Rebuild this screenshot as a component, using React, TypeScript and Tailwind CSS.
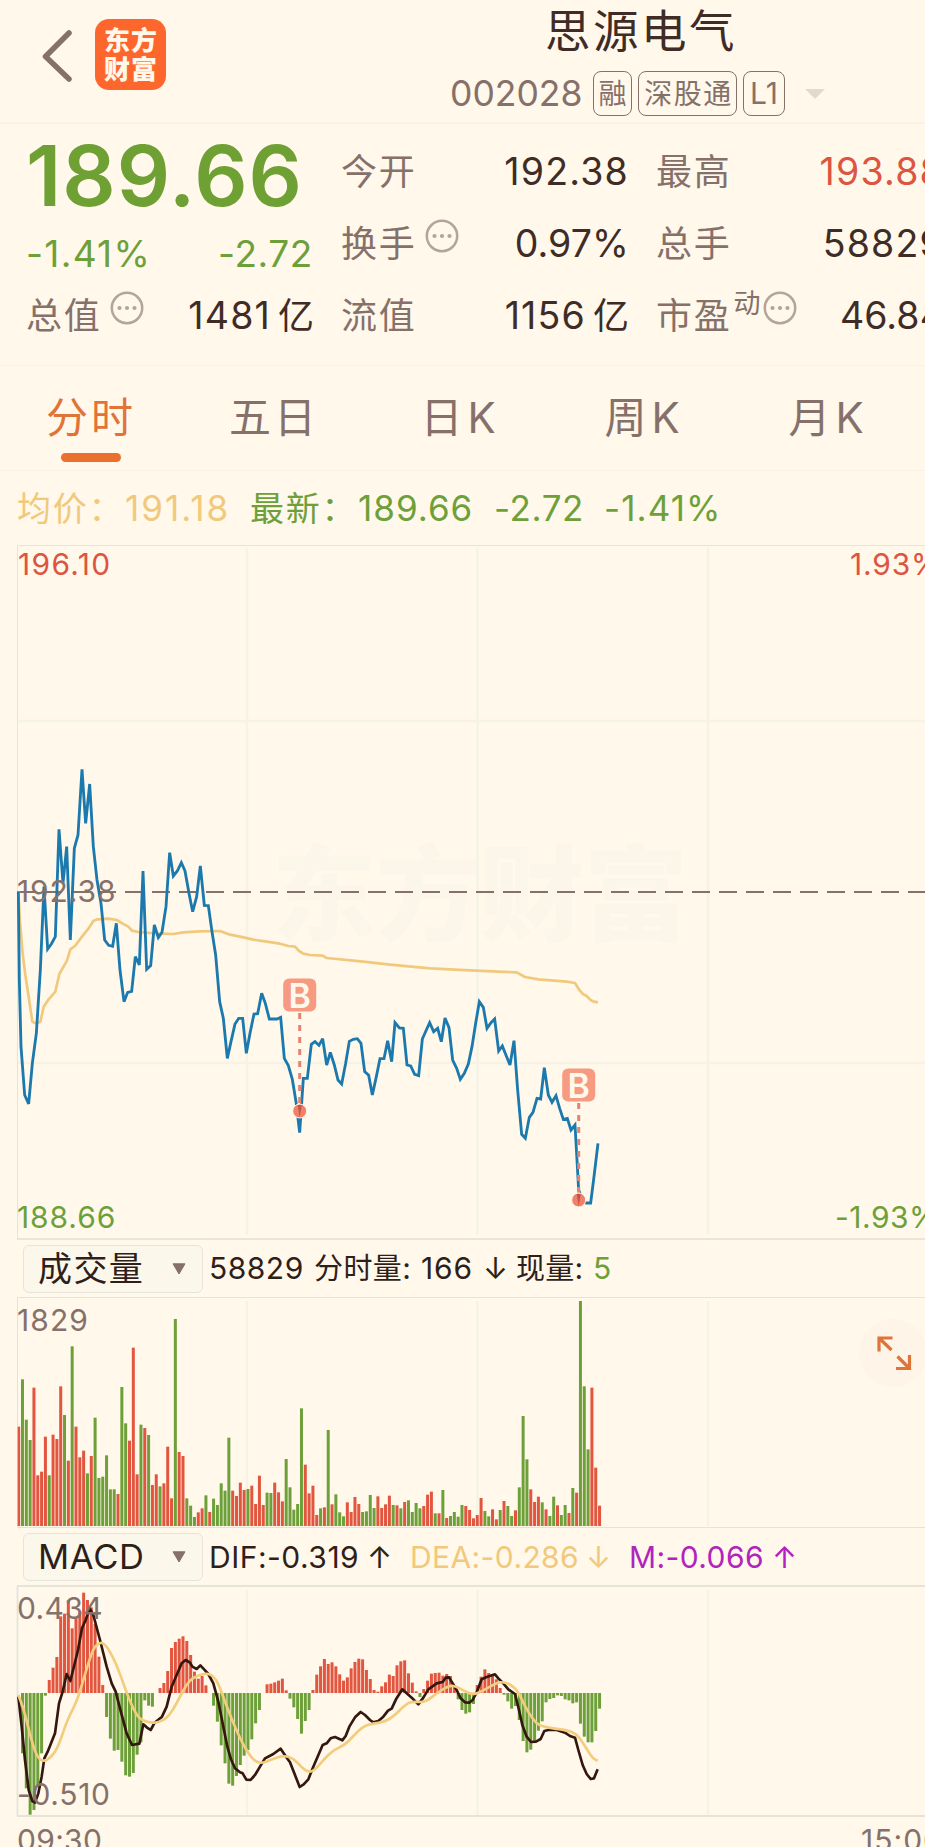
import React from "react";

type Pt = [number, number];

/** Parses "x,y x,y ..." and moves the points by (dx, dy). */
const pts = (s: string, dx = 0, dy = 0): Pt[] =>
  s.trim().split(/\s+/).map((p) => {
    const [x, y] = p.split(",").map(Number);
    return [x + dx, y + dy];
  });
const line = (p: Pt[]) => p.map((q) => q.join(",")).join(" ");
const smooth = (p: Pt[]) => {
  let d = `M${p[0][0]} ${p[0][1]}`;
  for (let i = 1; i < p.length - 1; i++) {
    d += ` Q${p[i][0]} ${p[i][1]} ${(p[i][0] + p[i + 1][0]) / 2} ${(p[i][1] + p[i + 1][1]) / 2}`;
  }
  const l = p[p.length - 1];
  return d + ` L${l[0]} ${l[1]}`;
};

const PRICE: Pt[] = [
  ...pts(`55,455 58,720 63,920 74,1065 86,1092 97,970 109,880 121,690 132,440 143,627 154,612 166,590 177,268 189,430 200,320 211,600
  223,325 234,285 246,88 257,250 269,132 280,320 291,420 303,490 314,600 326,616 338,619 349,550 360,690 372,785 383,757 395,754 406,650
  418,675 429,393 440,688 452,677 463,555 475,593 486,577 498,500 509,338 520,408 532,393 544,368 555,393 567,460 578,515 590,470 601,378
  613,496 625,497 636,575 647,645 659,785 670,835 682,955 693,905 705,852 716,835 728,835 739,940 750,880 762,822 773,821 785,760 796,790
  808,837 831,837 842,832 853,955 865,977 877,1018 888,1085 899,1178`),
  ...pts(`40,835 52,835 64,733 75,725 87,736 98,716 110,795 121,757 133,795 144,840 155,852 167,790 178,724 190,718 202,716 213,730
  224,815 236,826 247,885 259,830 270,776 282,776 293,722 305,785 315,668 328,684 340,685 351,795 362,798 374,823 386,827 397,717 409,690
  419,668 431,695 443,685 454,725 465,654 477,683 488,780 500,805 511,838 523,820 535,792 546,740 557,670 568,605 580,622 591,685 603,668
  614,657 626,753 637,738 649,768 660,795 672,722 683,870 695,1003 706,1015 718,952 729,937 741,895 752,897 763,803 775,885 786,907
  798,887 809,925 820,958 832,955 843,990 855,975 861,1080 866,1170 880,1205 889,1209 902,1209 912,1130 924,1030`, 870, 180),
];

const AVERAGE: Pt[] = [
  ...pts(`55,455 60,545 68,640 76,705 86,770 97,845 108,850 121,846 131,800 143,782 166,755 178,702 201,662 211,628 225,618 246,590
  268,562 280,543 292,538 325,536 350,540 372,553 385,560 396,572 415,576 450,579 480,581 520,582 550,577 600,574 660,573 690,584
  720,590 760,599 800,605 840,611 865,618`),
  ...pts(`15,440 27,453 40,461 60,465 98,467 110,474 220,485 300,494 420,505 540,511 680,517 705,531 745,538 830,545 855,549 868,570
  880,583 890,588 903,601 912,605 924,607`, 870, 180),
];

const DIF: Pt[] = [
  ...pts(`55,530 65,620 75,720 86,810 97,843 105,848 115,820 125,770 133,715 143,695 165,640 177,550 188,515 200,462 211,483 223,435
  234,390 246,325 257,300 269,265 280,285 300,360 320,440 335,490 347,515 360,565 380,640 396,675 418,671 430,613 440,622 452,630
  464,608 486,590 500,560 515,500 530,465 545,430 557,420 570,428 577,440 590,447 601,436 613,449 625,462 640,490 655,545 670,620
  682,680 693,718 705,745 720,757 728,760 739,779 752,780 765,765 780,740 795,715 820,702 842,686 858,710 870,727 885,765 899,801
  911,793 925,778`),
  ...pts(`10,740 38,675 50,670 62,655 75,651 97,661 107,648 118,620 135,592 152,576 165,585 180,600 190,607 205,603 220,590 234,572
  245,566 258,538 277,508 290,520 305,533 325,553 340,533 355,508 380,490 398,486 407,473 417,472 428,490 440,510 452,535 465,547
  478,548 488,540 500,517 515,478 530,471 555,463 565,475 580,490 595,508 615,522 627,570 637,615 650,650 663,666 678,665 692,657
  703,633 715,630 740,630 765,638 780,648 795,653 805,690 818,735 830,762 842,777 852,775 863,748`, 930, 0),
];

const DEA: Pt[] = [
  ...pts(`55,525 70,560 90,645 110,710 131,726 155,710 175,680 200,605 220,565 235,530 250,480 265,430 280,385 300,366 315,373 330,395
  350,435 370,490 390,545 410,585 425,601 460,610 490,602 510,583 530,550 550,510 570,480 590,468 620,459 640,468 655,490 675,545
  700,610 725,665 745,700 765,724 785,730 810,720 850,706 880,715 905,742 925,757`),
  ...pts(`15,750 40,720 70,690 105,675 130,648 160,618 190,610 220,607 250,590 290,550 310,545 345,547 380,520 415,498 435,497 460,512
  490,525 520,512 560,488 580,486 605,495 625,515 645,560 670,600 690,618 735,626 770,630 800,642 820,670 835,695 850,717 863,722`, 930, 0),
];

const VOLUME = `r710 g568 g689 g750 r593 r856 r845 r740 g856 r734 r747 r589 g675 r812 g469 r710 r802 r782 g850 r798 g683 g864 g860 g796
g898 g898 r912 g591 g700 r752 r473 r853 g704 r714 g735 r885 r853 g889 r880 r770 r925 g387 r786 r798 g925 g947 g981 r967 r955 g916 r966
g926 g945 g880 g902 g743 r902 r918 r878 r900 g897 r887 r942 r857 r945 g908 g909 r878 r907 r934 g807 g892 g959 g942 g655 r824 r910 r887
r975 g955 r952 g720 r943 g913 g967 g979 r937 r966 r921 r942 g966 g964 g915 g954 r919 r954 r943 r917 g945 r946 g955 r936 g931 g966 g939
g955 r948 r914 r905 g970 r970 g900 r984 g978 g966 g980 g945 r948 r960 r985 r975 r924 g963 g979 r958 r988 g960 r933 g948 g978 r961 g892
g678 g808 r898 r936 r920 g937 r958 g978 g920 r946 g975 g945 r969 g894 r908 g333 g589 g778 r593 r833 r947`.split(/\s+/);

const HIST = `519 700 805 884 870 800 700 527 480 443 411 289 281 240 325 295 275 218 240 262 312 410 495 591 656 692 690 725 766 770 759
704 667 541 557 560 519 504 489 453 384 366 356 349 363 405 455 476 468 496 519 557 605 676 730 791 797 768 735 707 690 658 610 570 519
493 491 487 482 476 511 536 562 597 641 603 570 510 464 439 417 432 427 439 463 482 472 445 426 416 418 450 477 510 515 499 487 464 468
436 424 421 460 488 514 531 507 482 461 459 458 467 462 468 497 538 570 581 577 552 495 470 448 459 465 478 504 524 544 566 558 600 663
697 689 666 632 604 547 537 534 526 528 538 541 550 547 611 650 667 667 633 566`.split(/\s+/).map(Number);

const GREEN = "#6ea03a";
const RED = "#e2553f";
const barX = (i: number) => 56 + 11.465 * i;

function Info() {
  return (
    <svg className="size-8.5 shrink-0" viewBox="0 0 34 34" fill="#b3a49c">
      <circle cx="17" cy="17" r="15.2" fill="none" stroke="#b3a49c" strokeWidth="2.5" />
      <circle cx="9.5" cy="17" r="2.1" />
      <circle cx="17" cy="17" r="2.1" />
      <circle cx="24.5" cy="17" r="2.1" />
    </svg>
  );
}

function Field({ label, sup, info, value, unit, red, wide }: { label: string; sup?: string; info?: boolean; value: string; unit?: string; red?: boolean; wide?: boolean }) {
  return (
    <div className="-mr-0.5 flex h-18 items-center justify-between whitespace-nowrap">
      <div className="-ml-px flex items-center text-[36px] tracking-[1.8px] text-[#86706a]">
        <span>{label}</span>
        {sup && <span className="mr-0.5 ml-0.5 -translate-y-3 text-[27px] tracking-normal">{sup}</span>}
        {info && <span className={sup ? "-translate-y-2" : "ml-2 -translate-y-2"}><Info /></span>}
      </div>
      <div className={red ? "text-[37.5px] text-[#dc5541]" : "text-[37.5px] text-[#3f2c26]"}>
        <span className={wide ? "tracking-[1.2px]" : "tracking-[0.1px]"}>{value}</span>
        {unit && <span className="ml-[7px] text-[36px]">{unit}</span>}
      </div>
    </div>
  );
}

function Picker({ children, cjk }: { children: string; cjk?: boolean }) {
  return (
    <div className="flex h-12 w-[180px] shrink-0 items-center justify-between rounded-md border border-[#e6e5dc] bg-[#fbf7ea] pr-4 pl-3.5">
      <span className={cjk ? "text-[34px] tracking-[1.4px]" : "text-[34.5px] tracking-[0.7px]"}>{children}</span>
      <svg className="h-3 w-3.5" viewBox="0 0 14 12">
        <path d="M1 0.8H13L7 11Z" fill="#86706a" stroke="#86706a" strokeLinejoin="round" />
      </svg>
    </div>
  );
}

function Buy({ x, y, dot }: { x: number; y: number; dot: number }) {
  return (
    <g>
      <line x1={x} y1={y + 18} x2={x} y2={dot} stroke="#e78372" strokeWidth="3" strokeDasharray="6 6" />
      <circle cx={x} cy={dot} r="7" fill="#f0806a" stroke="#fff8eb" strokeWidth="1" />
      <path d={`M${x - 2} ${dot - 6}L${x} ${dot + 6}L${x + 2} ${dot - 6}`} fill="#c65348" />
      <rect x={x - 16.5} y={y - 16.5} width="33" height="33" rx="6" fill="#f69a82" />
      <text x={x} y={y + 12.5} textAnchor="middle" fontSize="34" fontWeight="600" fill="#fff8eb">B</text>
    </g>
  );
}

const TABS = ["分时", "五日", "日K", "周K", "月K"];

export default function App() {
  return (
    <div className="h-[1847px] w-[925px] overflow-hidden bg-[#fff8eb] font-['Inter','Noto_Sans_CJK_SC',sans-serif] font-[370] text-[#2f1f1a]">
      <header className="flex h-[124px] border-b-2 border-[#faf2e7] pl-10">
        <svg className="mt-7 h-14 w-9" viewBox="0 0 36 56" fill="none" stroke="#86706a" strokeWidth="5.5" strokeLinecap="round" strokeLinejoin="round">
          <path d="M29 5L5.5 28.5L29 51" />
        </svg>
        <div className="mt-[19px] ml-[19px] grid size-[71px] grid-cols-[26px_26px] place-content-center gap-x-px rounded-[14px] bg-[#fd672e] text-[26px] leading-[29px] font-black text-[#fff8eb]">
          <span>东</span><span>方</span><span>财</span><span>富</span>
        </div>
        <div className="ml-[284px] flex flex-col">
          <h1 className="h-[71px] shrink-0 pl-[95px] text-[45.5px] leading-[64px] tracking-[2.5px] whitespace-nowrap text-[#3f2c26]">思源电气</h1>
          <div className="flex shrink-0 items-center whitespace-nowrap text-[#86706a]">
            <span className="w-[143px] text-[35.5px] leading-[44px]">002028</span>
            <span className="flex h-[45px] w-[39px] items-center justify-center rounded-lg border border-[#86706a] text-[28px]">融</span>
            <span className="ml-1.5 flex h-[45px] w-[99px] items-center justify-center rounded-lg border border-[#86706a] pl-0.5 text-[28px] tracking-[1.5px]">深股通</span>
            <span className="ml-1.5 flex h-[45px] w-[42px] items-center justify-center rounded-lg border border-[#86706a] text-[30px]">L1</span>
            <svg className="ml-[19px] h-3 w-5.5" viewBox="0 0 22 12"><path d="M1 1H21L11 11Z" fill="#e3d9cf" /></svg>
          </div>
        </div>
      </header>

      <section className="flex h-[242px] gap-[30px] border-b border-[#faf2e7] pt-3 pl-[27px]">
        <div className="w-[285px] shrink-0">
          <div className="-ml-px h-[91px] text-[83.5px] leading-[80px] font-semibold tracking-[1px] text-[#6ea033]">189.66</div>
          <div className="-mr-px flex h-[53px] items-center justify-between pt-px text-[37px] text-[#6ea03a]">
            <span className="-ml-px tracking-[1.3px]">-1.41%</span>
            <span className="tracking-[0.6px]">-2.72</span>
          </div>
          <Field label="总值" info value="1481" unit="亿" wide />
        </div>
        <div className="w-[285px] shrink-0">
          <Field label="今开" value="192.38" wide />
          <Field label="换手" info value="0.97%" />
          <Field label="流值" value="1156" unit="亿" wide />
        </div>
        <div className="w-[285px] shrink-0">
          <Field label="最高" red value="193.88" wide />
          <Field label="总手" value="58829" wide />
          <Field label="市盈" sup="动" info value="46.84" />
        </div>
      </section>

      <nav className="flex h-[105px] border-b border-[#faf2e7] text-[42px]">
        {TABS.map((t, i) => (
          <div key={t} className={i === 0 ? "flex w-[182px] shrink-0 flex-col items-center text-[#df7338]" : "flex w-[184px] shrink-0 flex-col items-center text-[#86706a]"}>
            <span className="mt-[23px] h-16 leading-[58px] tracking-[3px]">{t.endsWith("K") ? <>{t[0]}<span className="ml-0.5 tracking-normal">K</span></> : t}</span>
            {i === 0 && <span className="h-[9px] w-15 rounded-full bg-[#ec702d]" />}
          </div>
        ))}
      </nav>

      <div className="flex h-[74px] items-center pt-px pl-[17px] text-[35px] whitespace-nowrap text-[#6ea03a]">
        <span className="w-[108px] text-[34px] tracking-[1.8px] text-[#f1c97c]">均价：</span>
        <span className="w-[125px] tracking-[2px] text-[#f1c97c]">191.18</span>
        <span className="w-[108px] text-[34px] tracking-[1.8px]">最新：</span>
        <span className="w-[136px] tracking-[1px]">189.66</span>
        <span className="w-[110px] tracking-[0.6px]">-2.72</span>
        <span className="tracking-[1.1px]">-1.41%</span>
      </div>

      <section className="relative h-[695px] text-[30px] leading-9">
        <svg className="block" width="925" height="695" viewBox="0 0 925 695" fill="none">
          <text x="272" y="388" fontSize="104" fontWeight="900" fill="#fbf6e9">东方财富</text>
          <path d="M247 3V690M477.5 3V690M708 3V690M18 176H925M18 518H925" stroke="#f6f2e6" strokeWidth="2.4" />
          <path d="M17.5 694V0.5H925" stroke="#e3e5da" />
          <path d="M17 694H925" stroke="#ebe4d9" strokeWidth="2" />
          <path d="M17 347H925" stroke="#86706a" strokeWidth="2" strokeDasharray="18 9" />
          <g transform="translate(0 195) scale(0.33333)">
            <polyline points={line(AVERAGE)} stroke="#f1c97c" strokeWidth="8" strokeLinejoin="round" />
            <polyline points={line(PRICE)} stroke="#1b79ae" strokeWidth="8.5" strokeLinejoin="miter" strokeMiterlimit="3" />
          </g>
          <Buy x={299.7} y={450} dot={566} />
          <Buy x={578.7} y={540} dot={655} />
        </svg>
        <span className="absolute top-[1px] left-[18px] tracking-[1.3px] text-[#dc5541]">196.10</span>
        <span className="absolute top-[1px] left-[850px] tracking-[0.8px] text-[#dc5541]">1.93%</span>
        <span className="absolute top-[328px] left-[17px] tracking-[0.9px] text-[#86706a]">192.38</span>
        <span className="absolute bottom-[5px] left-[17px] tracking-[0.9px] text-[#6ea03a]">188.66</span>
        <span className="absolute bottom-[5px] left-[835px] tracking-[0.5px] text-[#6ea03a]">-1.93%</span>
      </section>

      <div className="flex h-[57px] items-center pl-[23px] text-[30px] whitespace-nowrap">
        <Picker cjk>成交量</Picker>
        <span className="ml-[6px] w-[105px] tracking-[0.5px]">58829</span>
        <span className="w-[107px]"><span className="text-[29px] tracking-[0.4px]">分时量</span>:</span>
        <span className="w-[62px] tracking-[0.9px]">166</span>
        <span className="w-[33px]">↓</span>
        <span className="w-[77px]"><span className="text-[29px] tracking-[0.3px]">现量</span>:</span>
        <span className="text-[#6ea03a]">5</span>
      </div>

      <section className="relative h-[231px] text-[30px] leading-9">
        <svg className="block" width="925" height="231" viewBox="0 0 925 231" fill="none">
          <path d="M247 4V229M477.5 4V229M708 4V229" stroke="#f6f2e6" strokeWidth="2.2" />
          <path d="M17.5 230.5V0.5H925M17.5 230.5H925" stroke="#e6e2d8" />
          <circle cx="893" cy="56" r="34" fill="#fef5e8" />
          <g stroke="#df7338" strokeWidth="3.2">
            <path d="M879 54.500V41H892.500M879.500 41.500L891.500 53" />
            <path d="M909.500 58V71.500H896M909 71L897.500 59.500" />
          </g>
          <g transform="translate(0 -107) scale(0.33333)">
            {VOLUME.map((v, i) => {
              const top = Number(v.slice(1));
              const left = Math.max(barX(i) - 4.5, 53);
              return <rect key={i} x={left} y={top} width={barX(i) + 4.5 - left} height={1008 - top} fill={v[0] === "r" ? RED : GREEN} />;
            })}
          </g>
        </svg>
        <span className="absolute top-[5px] left-[17px] tracking-[1.1px] text-[#86706a]">1829</span>
      </section>

      <div className="flex h-[57px] items-center pt-px pl-[23px] text-[30px] whitespace-nowrap">
        <Picker>MACD</Picker>
        <span className="ml-[6px] w-[158px] tracking-[0.5px]">DIF:-0.319</span>
        <span className="w-[43px]">↑</span>
        <span className="w-[176px] tracking-[0.4px] text-[#f1c97c]">DEA:-0.286</span>
        <span className="w-[43px] text-[#f1c97c]">↓</span>
        <span className="w-[143px] tracking-[0.4px] text-[#b123bd]">M:-0.066</span>
        <span className="text-[#b123bd]">↑</span>
      </div>

      <section className="relative h-[232px] text-[30px] leading-9">
        <svg className="block" width="925" height="232" viewBox="0 0 925 232" fill="none">
          <path d="M247 5V230M477.5 5V230M708 5V230" stroke="#f6f2e6" strokeWidth="2.2" />
          <path d="M17.5 231V1M17 1H925M17 231H925" stroke="#e6e4d9" strokeWidth="1.8" />
          <g transform="translate(0 -65) scale(0.33333)">
            {HIST.map((v, i) =>
              v === 519 ? null : (
                <rect key={i} x={barX(i) - 4.5} y={Math.min(v, 519)} width="9" height={Math.abs(v - 519)} fill={v < 519 ? RED : GREEN} />
              )
            )}
            <polyline points={line(DIF)} stroke="#34170f" strokeWidth="8" strokeLinejoin="round" />
            <path d={smooth(DEA)} stroke="#f3cc7c" strokeWidth="8" />
          </g>
        </svg>
        <span className="absolute top-[5px] left-[17px] tracking-[0.4px] text-[#86706a]">0.434</span>
        <span className="absolute bottom-[5px] left-[17px] tracking-[0.7px] text-[#86706a]">-0.510</span>
      </section>

      <div className="flex justify-between pt-[5px] pl-[17px] text-[30px] leading-9 text-[#86706a]">
        <span className="tracking-[0.3px]">09:30</span>
        <span className="-mr-[18px] tracking-[1px]">15:00</span>
      </div>
    </div>
  );
}
